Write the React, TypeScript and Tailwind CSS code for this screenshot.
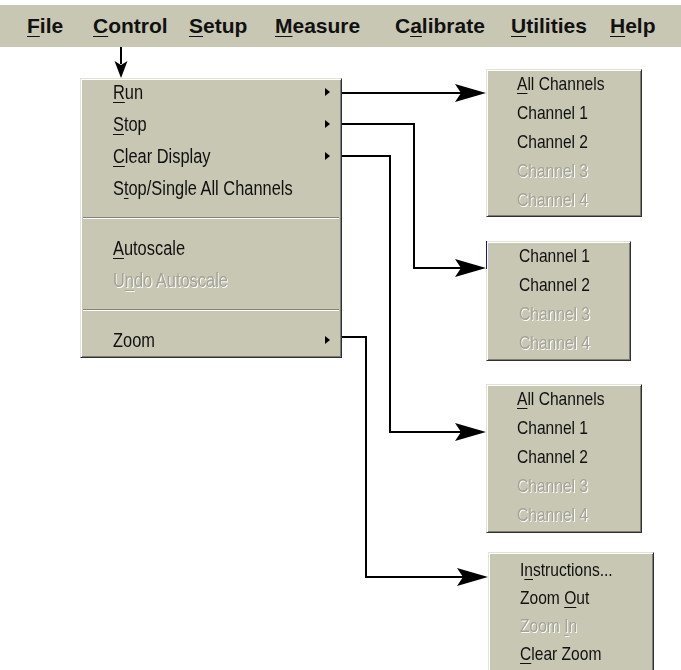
import React from "react";

// Win95-style menu diagram: the Control menu and its cascading submenus.

type Item = { label: string; u?: number; disabled?: boolean; sub?: boolean };

const font = "font-['Liberation_Sans',Arial,sans-serif]";
const panel =
  "bg-[#c8c7b4] border border-t-[#e2e2d6] border-l-[#e2e2d6] border-r-[#303030] border-b-[#303030] shadow-[inset_1px_1px_0_#ffffff,inset_-1px_-1px_0_#7e7e72]";

function Label({ text, u }: { text: string; u?: number }) {
  if (u === undefined) return <>{text}</>;
  return (
    <>
      {text.slice(0, u)}
      <span className="underline decoration-1 underline-offset-[3px]">{text[u]}</span>
      {text.slice(u + 1)}
    </>
  );
}

function Caret() {
  return (
    <svg width="5" height="8" viewBox="0 0 5 8" className="shrink-0">
      <path d="M0 0 L5 4 L0 8 Z" fill="#000" />
    </svg>
  );
}

// the screenshot uses a narrow face; squeeze Liberation Sans horizontally
function Narrow({ children, className = "" }: { children: React.ReactNode; className?: string }) {
  return (
    <span className={`inline-block origin-left scale-x-[0.82] whitespace-nowrap ${className}`}>
      {children}
    </span>
  );
}

function Row({ item, h, pl }: { item: Item; h: string; pl: string }) {
  return (
    <div className={`flex items-center justify-between pr-[11px] ${h} ${pl}`}>
      <Narrow
        className={
          item.disabled ? "text-[#a3a296] [text-shadow:1px_1px_0_#ffffff]" : "text-[#111]"
        }
      >
        <Label text={item.label} u={item.u} />
      </Narrow>
      {item.sub && <Caret />}
    </div>
  );
}

function Separator() {
  return (
    <div className="flex h-[28px] flex-col justify-center px-[2px]">
      <div className="h-px bg-[#85857a]" />
      <div className="h-px bg-white" />
    </div>
  );
}

const bar: { label: string; u: number; w: string }[] = [
  { label: "File", u: 0, w: "w-[66px]" },
  { label: "Control", u: 0, w: "w-[96px]" },
  { label: "Setup", u: 0, w: "w-[86px]" },
  { label: "Measure", u: 0, w: "w-[120px]" },
  { label: "Calibrate", u: 1, w: "w-[116px]" },
  { label: "Utilities", u: 0, w: "w-[99px]" },
  { label: "Help", u: 0, w: "w-[64px]" },
];

const channels = (all: boolean): Item[] => [
  ...(all ? [{ label: "All Channels", u: 0 }] : []),
  { label: "Channel 1" },
  { label: "Channel 2" },
  { label: "Channel 3", disabled: true },
  { label: "Channel 4", disabled: true },
];

const zoomItems: Item[] = [
  { label: "Instructions...", u: 1 },
  { label: "Zoom Out", u: 5 },
  { label: "Zoom In", u: 5, disabled: true },
  { label: "Clear Zoom", u: 0 },
];

function Arrow({ d, tip }: { d: string; tip: [number, number] }) {
  const [x, y] = tip;
  return (
    <>
      <path d={d} fill="none" stroke="#000" strokeWidth="2" />
      <path d={`M${x} ${y} L${x - 31} ${y - 9} L${x - 25} ${y} L${x - 31} ${y + 9} Z`} fill="#000" />
    </>
  );
}

export default function App() {
  return (
    <div className={`relative h-[670px] w-[681px] overflow-hidden bg-white ${font}`}>
      <div className="mt-[5px] flex h-[42px] items-center bg-[#c8c7b4] pl-[27px] text-[21px] font-bold text-[#111]">
        {bar.map((b) => (
          <span key={b.label} className={`shrink-0 whitespace-nowrap ${b.w}`}>
            <Label text={b.label} u={b.u} />
          </span>
        ))}
      </div>

      <div className={`ml-[80px] mt-[31px] w-[262px] pb-[1px] text-[20px] ${panel}`}>
        <div className="-mt-[3px]">
          <Row h="h-[32px]" pl="pl-[32px]" item={{ label: "Run", u: 0, sub: true }} />
          <Row h="h-[32px]" pl="pl-[32px]" item={{ label: "Stop", u: 0, sub: true }} />
          <Row h="h-[32px]" pl="pl-[32px]" item={{ label: "Clear Display", u: 0, sub: true }} />
          <Row h="h-[32px]" pl="pl-[32px]" item={{ label: "Stop/Single All Channels", u: 1 }} />
        </div>
        <Separator />
        <Row h="h-[32px]" pl="pl-[32px]" item={{ label: "Autoscale", u: 0 }} />
        <Row h="h-[32px]" pl="pl-[32px]" item={{ label: "Undo Autoscale", u: 1, disabled: true }} />
        <Separator />
        <Row h="h-[32px]" pl="pl-[32px]" item={{ label: "Zoom", sub: true }} />
      </div>

      {/* cascading submenus, placed as nodes of the diagram */}
      <div className={`absolute left-[486px] top-[69px] w-[156px] pb-[1px] text-[19px] ${panel}`}>
        {channels(true).map((it) => (
          <Row key={it.label} h="h-[29px]" pl="pl-[30px]" item={it} />
        ))}
      </div>

      <div className={`absolute left-[486px] top-[241px] w-[145px] pb-[2px] text-[19px] ${panel}`}>
        <span className="absolute left-[-1px] top-[-1px] h-[28px] w-px bg-[#1010b0]" />
        {channels(false).map((it) => (
          <Row key={it.label} h="h-[29px]" pl="pl-[32px]" item={it} />
        ))}
      </div>

      <div className={`absolute left-[486px] top-[384px] w-[156px] pb-[2px] text-[19px] ${panel}`}>
        {channels(true).map((it) => (
          <Row key={it.label} h="h-[29px]" pl="pl-[30px]" item={it} />
        ))}
      </div>

      <div className={`absolute left-[488px] top-[552px] w-[166px] pb-[12px] pt-[3px] text-[19px] ${panel}`}>
        {zoomItems.map((it) => (
          <Row key={it.label} h="h-[28px]" pl="pl-[31px]" item={it} />
        ))}
      </div>

      <svg className="pointer-events-none absolute inset-0" width="681" height="670" viewBox="0 0 681 670">
        <path d="M121 47 V64" stroke="#000" strokeWidth="2" />
        <path d="M121 78 L114.5 61 L121 65 L127.5 61 Z" fill="#000" />
        <Arrow d="M342 93 H462" tip={[486, 93]} />
        <Arrow d="M342 124 H414 V268 H462" tip={[486, 268]} />
        <Arrow d="M342 156 H390 V432 H462" tip={[486, 432]} />
        <Arrow d="M342 337 H366 V577 H464" tip={[488, 577]} />
      </svg>
    </div>
  );
}
